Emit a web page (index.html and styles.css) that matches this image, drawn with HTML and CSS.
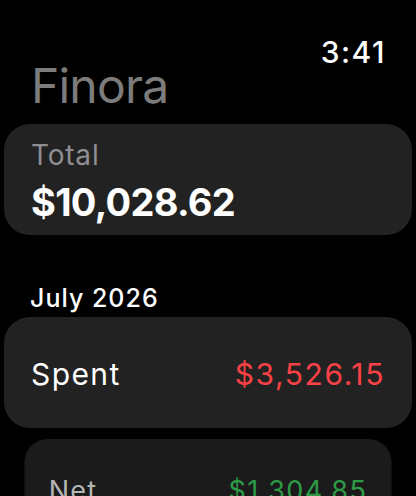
FILE: index.html
```html
<!DOCTYPE html>
<html>
<head>
<meta charset="utf-8">
<link rel="stylesheet" href="styles.css">
</head>
<body>
<div class="screen">
  <div class="status"><span class="time">3:41</span></div>
  <h1 class="title">Finora</h1>
  <div class="card total">
    <div class="label">Total</div>
    <div class="amount">$10,028.62</div>
  </div>
  <div class="section">July 2026</div>
  <div class="card row">
    <span class="row-label">Spent</span>
    <span class="row-value red">$3,526.15</span>
  </div>
  <div class="card row dim">
    <span class="row-label">Net</span>
    <span class="row-value green">$1,304.85</span>
  </div>
</div>
</body>
</html>
```
FILE: styles.css
```css
html, body {
  margin: 0;
  padding: 0;
  background: #000;
}
.screen {
  width: 416px;
  height: 496px;
  overflow: hidden;
  background: #000;
  font-family: Inter, Roboto, "Liberation Sans", sans-serif;
  color: #fff;
  display: flex;
  flex-direction: column;
}
.status {
  display: flex;
  justify-content: flex-end;
  padding: 34px 30px 0 0;
  height: 36px;
  flex-shrink: 0;
}
.time {
  font-size: 30px;
  font-weight: 500;
  line-height: 36px;
  letter-spacing: 1.5px;
}
.title {
  margin: -12px 0 0 31px;
  font-size: 48px;
  font-weight: 400;
  line-height: 56px;
  letter-spacing: -0.8px;
  color: #7c7c7c;
}
.card {
  margin: 0 4px;
  background: #222222;
  border-radius: 26px;
  flex-shrink: 0;
}
.total {
  margin-top: 10px;
  height: 111px;
  padding: 15px 27px 0;
  box-sizing: border-box;
}
.label {
  font-size: 28px;
  line-height: 32px;
  color: #8e8e93;
  letter-spacing: 0.8px;
}
.amount {
  font-size: 38px;
  font-weight: 700;
  line-height: 46px;
  margin-top: 8px;
  letter-spacing: -0.7px;
}
.section {
  margin: 48px 0 0 30px;
  font-size: 25px;
  font-weight: 500;
  line-height: 30px;
  letter-spacing: 1px;
}
.row {
  margin-top: 4px;
  height: 111px;
  padding: 3px 27px 0 27px;
  box-sizing: border-box;
  display: flex;
  align-items: center;
  justify-content: space-between;
}
.row-label {
  font-size: 30px;
  letter-spacing: 1.4px;
}
.row-value {
  font-size: 30px;
  letter-spacing: 1.6px;
}
.red { color: #fa4146; }
.green { color: #2d9b45; }
.dim {
  margin-top: 11px;
  transform: scale(0.9);
  transform-origin: top center;
  background: #1b1b1b;
}
.dim .row-label { color: #b5b5b5; }
```
